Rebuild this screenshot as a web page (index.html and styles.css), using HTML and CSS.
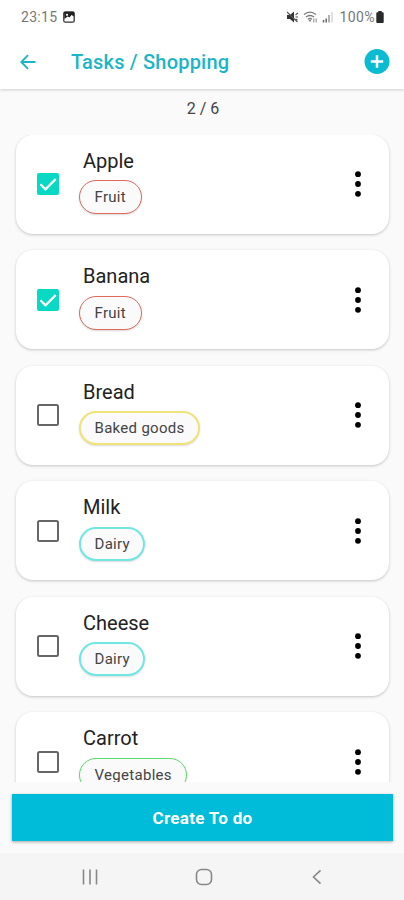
FILE: index.html
```html
<!DOCTYPE html>
<html lang="en">
<head>
    <meta charset="UTF-8">
    <meta name="viewport" content="width=device-width, initial-scale=1.0">
    <title>Tasks / Shopping</title>
    <link rel="stylesheet" href="styles.css">
</head>
<body>
    <div class="app">
        <header class="header">
            <div class="status-bar">
                <span class="time">23:15</span>
                <svg class="photo-icon" width="12" height="12" viewBox="0 0 12 12">
                    <rect x="0.8" y="0.8" width="10.4" height="10.4" rx="1.5" fill="#fff" stroke="#333" stroke-width="1.3"/>
                    <path d="M1 1h10v4.500L8.500 4 6.500 6.500 4.500 5.500 1.500 8z" fill="#222"/>
                    <circle cx="4" cy="3.800" r="1.100" fill="#fff"/>
                </svg>
                <div class="status-icons">
                    <svg width="13" height="12" viewBox="0 0 13 12">
                        <path d="M1 4h3l4-3.500v11L4 8H1z" fill="#333"/>
                        <path d="M1 1l10.500 10M9.500 4l2.500-2M9.500 6H12M9.500 8l2 1" stroke="#555" stroke-width="1.100" fill="none"/>
                    </svg>
                    <svg width="15" height="12" viewBox="0 0 15 12">
                        <path d="M1 3.600Q7 -1.200 13 3.600M3 6q4-3 8 0M5 8.200q2-1.400 4 0" stroke="#777" stroke-width="1.300" fill="none"/>
                        <path d="M7 11l-1.300-1.700h2.600z" fill="#555"/>
                        <path d="M10.800 7.500v4M13.200 7.500v4" stroke="#888" stroke-width="1"/>
                    </svg>
                    <svg width="12" height="12" viewBox="0 0 12 12">
                        <path d="M1.500 9v2.500M4.200 7.500v4" stroke="#666" stroke-width="1.500"/>
                        <path d="M7 4v7.500" stroke="#999" stroke-width="1.500"/>
                        <path d="M10 1v10.500" stroke="#ddd" stroke-width="1.800"/>
                    </svg>
                    <span class="battery-text">100%</span>
                    <svg width="8" height="12" viewBox="0 0 8 12">
                        <path d="M2.300 0h3.400v1.300h1q1 0 1 1V11q0 1-1 1H1.300q-1 0-1-1V2.300q0-1 1-1h1z" fill="#2a2a2a"/>
                    </svg>
                </div>
            </div>
            <div class="toolbar">
                <svg class="back" width="16" height="16" viewBox="0 0 16 16">
                    <path d="M15.500 8H1.800M8 1.200L1.300 8 8 14.800" fill="none" stroke="#1bb5c9" stroke-width="1.900"/>
                </svg>
                <h1>Tasks / Shopping</h1>
                <svg class="add" width="26" height="26" viewBox="0 0 26 26">
                    <circle cx="13" cy="12.500" r="12.500" fill="#0abbd2"/>
                    <path d="M13 6.300v12.400M6.800 12.500h12.400" stroke="#fff" stroke-width="2.500"/>
                </svg>
            </div>
        </header>

        <div class="counter">2 / 6</div>

        <main class="list">
            <div class="card">
                <svg class="checkbox" viewBox="0 0 22 22"><rect width="22" height="22" rx="2" fill="#09d8c4"/><path d="M3.500 11.300l5 5L18.700 6" fill="none" stroke="#fff" stroke-width="2.300"/></svg>
                <div class="info">
                    <h2>Apple</h2>
                    <span class="chip red">Fruit</span>
                </div>
                <svg class="more" viewBox="0 0 6 26"><circle cx="3" cy="3.200" r="2.900"/><circle cx="3" cy="13" r="2.900"/><circle cx="3" cy="22.800" r="2.900"/></svg>
            </div>
            <div class="card">
                <svg class="checkbox" viewBox="0 0 22 22"><rect width="22" height="22" rx="2" fill="#09d8c4"/><path d="M3.500 11.300l5 5L18.700 6" fill="none" stroke="#fff" stroke-width="2.300"/></svg>
                <div class="info">
                    <h2>Banana</h2>
                    <span class="chip red">Fruit</span>
                </div>
                <svg class="more" viewBox="0 0 6 26"><circle cx="3" cy="3.200" r="2.900"/><circle cx="3" cy="13" r="2.900"/><circle cx="3" cy="22.800" r="2.900"/></svg>
            </div>
            <div class="card">
                <svg class="checkbox" viewBox="0 0 22 22"><rect x="1" y="1" width="20" height="20" rx="1.500" fill="none" stroke="#666" stroke-width="2"/></svg>
                <div class="info">
                    <h2>Bread</h2>
                    <span class="chip yellow">Baked goods</span>
                </div>
                <svg class="more" viewBox="0 0 6 26"><circle cx="3" cy="3.200" r="2.900"/><circle cx="3" cy="13" r="2.900"/><circle cx="3" cy="22.800" r="2.900"/></svg>
            </div>
            <div class="card">
                <svg class="checkbox" viewBox="0 0 22 22"><rect x="1" y="1" width="20" height="20" rx="1.500" fill="none" stroke="#666" stroke-width="2"/></svg>
                <div class="info">
                    <h2>Milk</h2>
                    <span class="chip cyan">Dairy</span>
                </div>
                <svg class="more" viewBox="0 0 6 26"><circle cx="3" cy="3.200" r="2.900"/><circle cx="3" cy="13" r="2.900"/><circle cx="3" cy="22.800" r="2.900"/></svg>
            </div>
            <div class="card">
                <svg class="checkbox" viewBox="0 0 22 22"><rect x="1" y="1" width="20" height="20" rx="1.500" fill="none" stroke="#666" stroke-width="2"/></svg>
                <div class="info">
                    <h2>Cheese</h2>
                    <span class="chip cyan">Dairy</span>
                </div>
                <svg class="more" viewBox="0 0 6 26"><circle cx="3" cy="3.200" r="2.900"/><circle cx="3" cy="13" r="2.900"/><circle cx="3" cy="22.800" r="2.900"/></svg>
            </div>
            <div class="card">
                <svg class="checkbox" viewBox="0 0 22 22"><rect x="1" y="1" width="20" height="20" rx="1.500" fill="none" stroke="#666" stroke-width="2"/></svg>
                <div class="info">
                    <h2>Carrot</h2>
                    <span class="chip green">Vegetables</span>
                </div>
                <svg class="more" viewBox="0 0 6 26"><circle cx="3" cy="3.200" r="2.900"/><circle cx="3" cy="13" r="2.900"/><circle cx="3" cy="22.800" r="2.900"/></svg>
            </div>
        </main>

        <button class="create-btn">Create To do</button>

        <nav class="nav-bar">
            <svg width="16" height="16" viewBox="0 0 16 16"><path d="M1.500 .5v15M8 .5v15M14.500 .5v15" stroke="#888" stroke-width="1.600"/></svg>
            <svg width="18" height="18" viewBox="0 0 18 18"><rect x="1.500" y="1.500" width="15" height="15" rx="5" fill="none" stroke="#888" stroke-width="1.600"/></svg>
            <svg width="16" height="16" viewBox="0 0 16 16"><path d="M11.500 1.300L4.500 8l7 6.700" fill="none" stroke="#888" stroke-width="1.600"/></svg>
        </nav>
    </div>
</body>
</html>
```
FILE: styles.css
```css
* {
    margin: 0;
    padding: 0;
    box-sizing: border-box;
}

body {
    font-family: Roboto, "Liberation Sans", sans-serif;
    background: #fafafa;
}

svg {
    display: block;
    flex-shrink: 0;
}

.app {
    height: 900px;
    display: flex;
    flex-direction: column;
    overflow: hidden;
}

.header {
    height: 89px;
    flex-shrink: 0;
    background: #fff;
    box-shadow: 0 1px 3px rgba(0, 0, 0, 0.18);
}

.status-bar {
    height: 34px;
    display: flex;
    align-items: center;
    padding: 0 20px 0 21px;
    color: #777;
    font-size: 14px;
}

.time {
    letter-spacing: 0.3px;
}

.photo-icon {
    margin-left: 6px;
}

.status-icons {
    margin-left: auto;
    display: flex;
    align-items: center;
    gap: 4px;
}

.battery-text {
    letter-spacing: 0.4px;
    margin: 0 -3px 0 2px;
}

.toolbar {
    height: 55px;
    display: flex;
    align-items: center;
    padding: 0 14px 0 20px;
}

.toolbar h1 {
    margin-left: 35px;
    font-size: 20px;
    font-weight: 500;
    letter-spacing: 0.2px;
    color: #1bb5c9;
}

.add {
    margin-left: auto;
}

.counter {
    height: 45.5px;
    flex-shrink: 0;
    padding: 10px 0 0 2px;
    text-align: center;
    font-size: 16px;
    line-height: 20px;
    color: #444;
}

.list {
    height: 647px;
    flex-shrink: 0;
    overflow: hidden;
    padding: 0 15px 0 16px;
    display: flex;
    flex-direction: column;
    gap: 16.6px;
}

.card {
    height: 99px;
    flex-shrink: 0;
    display: flex;
    align-items: center;
    padding: 0 28.5px 0 21px;
    background: #fff;
    border-radius: 17px;
    box-shadow: 0 1px 3px rgba(0, 0, 0, 0.22);
}

.checkbox {
    width: 22px;
    height: 22px;
}

.info {
    align-self: flex-start;
    margin-left: 20px;
    padding-top: 13px;
}

.info h2 {
    margin-left: 4px;
    font-size: 20px;
    font-weight: 400;
    line-height: 26px;
    color: #222;
}

.chip {
    display: block;
    width: fit-content;
    height: 34px;
    margin-top: 6.5px;
    padding: 0 14.5px;
    border: 1px solid;
    border-radius: 17px;
    background: #fafafa;
    font-size: 15px;
    line-height: 33px;
    letter-spacing: 0.3px;
    color: #444;
    box-shadow: 0 1px 2px rgba(0, 0, 0, 0.15);
}

.chip.red {
    border-color: #dd6a5d;
}

.chip.yellow {
    padding: 0 13.5px;
    border: 2px solid #f0e37a;
    line-height: 31px;
}

.chip.cyan {
    padding: 0 13.5px;
    border: 2px solid #70e8e2;
    line-height: 31px;
}

.chip.green {
    border-color: #5ddd6c;
}

.more {
    width: 6px;
    height: 26px;
    margin-left: auto;
}

.create-btn {
    height: 47px;
    flex-shrink: 0;
    margin: 12.5px 11px 0 12px;
    border: none;
    background: #00bcd9;
    color: #fff;
    font-family: inherit;
    font-size: 17px;
    font-weight: 700;
    letter-spacing: 0.3px;
    box-shadow: 0 1px 3px rgba(0, 0, 0, 0.35);
}

.nav-bar {
    height: 47px;
    margin-top: auto;
    flex-shrink: 0;
    display: flex;
    align-items: center;
    justify-content: space-between;
    padding: 0 79px 0 82px;
    background: #f5f5f5;
}
```
